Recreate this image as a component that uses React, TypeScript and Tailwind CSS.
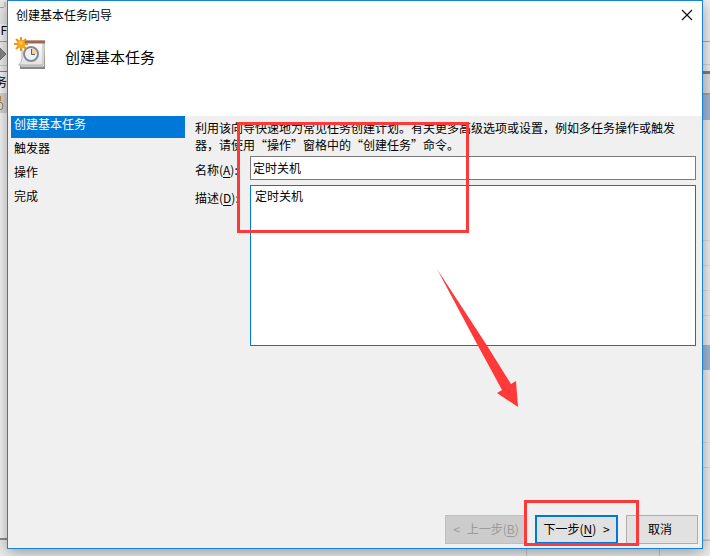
import type { ReactNode } from 'react';

const steps = ['创建基本任务', '触发器', '操作', '完成'];

const TaskIcon = () => (
  <svg width="34" height="34" viewBox="0 0 34 34" aria-hidden="true">
    <defs>
      <linearGradient id="page" x1="0" y1="0" x2="0" y2="1">
        <stop offset="0" stopColor="#ffffff" />
        <stop offset="1" stopColor="#e2e2e2" />
      </linearGradient>
      <linearGradient id="stack" x1="0" y1="0" x2="0" y2="1">
        <stop offset="0" stopColor="#d6d6d6" />
        <stop offset="1" stopColor="#858585" />
      </linearGradient>
    </defs>
    <path d="M29 4h2v28H6v-4h23z" fill="url(#stack)" />
    <path d="M7 29h22.500V6" fill="none" stroke="#f6f6f6" />
    <path d="M8 5h21v23H4.500q3-2 3.500-6z" fill="url(#page)" stroke="#b5b5b5" />
    <path d="M8 3h23v3.500H8z" fill="#9c6857" />
    <path d="M8 3.500h23" stroke="#c49a8a" />
    <circle cx="17" cy="17" r="7" fill="#eef2f6" stroke="#858b91" strokeWidth="2" />
    <path d="M17 17v-5.500a5.500 5.500 0 0 1 5.500 5.500z" fill="#f4d48b" />
    <path d="M17.500 12v5.500H21" fill="none" stroke="#4f6272" />
    <g stroke="#ee930c" strokeWidth="2">
      <path d="M7 0v14M0 7h14M2 2l10 10M12 2L2 12" />
    </g>
    <circle cx="7" cy="7" r="4" fill="#f9a51b" />
    <circle cx="7" cy="6" r="2" fill="#ffc43c" />
  </svg>
);

const Key = ({ children }: { children: ReactNode }) => (
  <span className="underline underline-offset-2">{children}</span>
);

const LeftStrip = () => (
  <div className="flex w-[7px] shrink-0 flex-col overflow-hidden bg-[#fafafa]">
    <div className="h-6 shrink-0 bg-[#eeeeee]">
      <svg width="7" height="24" viewBox="0 0 7 24" aria-hidden="true">
        <path d="M0 7.500h4M5 2v5" stroke="#aaaaaa" />
      </svg>
    </div>
    <div className="flex h-[17px] shrink-0 justify-end text-xs leading-3">F</div>
    <div className="flex h-6 shrink-0 items-center border-t border-[#a0a0a0] bg-[#f4f4f4]">
      <svg width="7" height="18" viewBox="0 0 7 18" aria-hidden="true">
        <path d="M0 3l6 6-6 6z" fill="#8e8e8e" stroke="#777" />
      </svg>
    </div>
    <div className="h-[6px] shrink-0 border-t border-[#cccccc] bg-[#f4f4f4]" />
    <div className="flex h-[22px] shrink-0 justify-end border-t border-[#888888] text-xs leading-5">务</div>
    <div className="h-5 shrink-0 bg-[#d9d9d9]">
      <svg width="7" height="20" viewBox="0 0 7 20" aria-hidden="true">
        <path d="M0 3v5" stroke="#c38a45" strokeWidth="2" />
        <circle cx="-1" cy="13" r="4" fill="#eee4ca" stroke="#8b8578" />
      </svg>
    </div>
    <div className="flex-1 border-b-2 border-[#919191]" />
    <div className="h-4 shrink-0 bg-[#f0f0f0]" />
  </div>
);

const RightStrip = () => (
  <div className="flex w-[7px] shrink-0 flex-col bg-[#f4f4f4]">
    <div className="h-[41px] shrink-0" />
    <div className="h-[23px] shrink-0 border-t border-[#b0b0b0]" />
    <div className="h-[7px] shrink-0 border-t border-[#d8d8d8]" />
    <div className="h-[22px] shrink-0 border-t-3 border-[#808080] bg-[#e4e4e4]" />
    <div className="h-[27px] shrink-0 border-t-2 border-[#a8a8a8] bg-[#a5bcda]" />
    <div className="h-[120px] shrink-0" />
    <div className="h-[25px] shrink-0 border-t border-[#e2e2e2]" />
    <div className="h-[25px] shrink-0 border-t border-[#e2e2e2]" />
    <div className="h-[25px] shrink-0 border-t border-[#e2e2e2]" />
    <div className="h-[30px] shrink-0 border-t border-[#e2e2e2]" />
    <div className="h-[25px] shrink-0 bg-[#a5bcda]" />
    <div className="h-[72px] shrink-0" />
    <div className="h-[25px] shrink-0 border-t border-[#e2e2e2]" />
    <div className="flex-1 border-y border-[#dcdcdc]" />
    <div className="h-4 shrink-0 border-t border-[#cccccc] bg-[#f0f0f0]" />
  </div>
);

const Arrow = () => (
  <svg className="pointer-events-none absolute left-[242px] top-[153px]" width="82" height="139" viewBox="0 0 82 139" aria-hidden="true">
    <path d="M0 0L49 75 74 115 79 112 81 138 60 124 65 121 40 75z" fill="#fd3a39" />
  </svg>
);

const Wizard = () => (
  <section
    aria-label="创建基本任务向导"
    className="relative z-10 flex min-w-0 flex-1 flex-col border border-[#1883d7] bg-[#f0f0f0] shadow-[0_3px_16px_rgba(0,0,0,0.4)]"
  >
    <header className="bg-white">
      <div className="flex h-7 items-center justify-between pl-2 pr-[9px]">
        <span>创建基本任务向导</span>
        <button type="button" aria-label="关闭">
          <svg width="12" height="12" viewBox="0 0 12 12" aria-hidden="true">
            <path d="M1 1l10 10M11 1L1 11" stroke="#111" strokeWidth="1.200" />
          </svg>
        </button>
      </div>
      <div className="flex h-[87px] items-start gap-[17px] pl-[6px] pt-2">
        <TaskIcon />
        <h1 className="pt-2 text-[15px] leading-6">创建基本任务</h1>
      </div>
    </header>

    <div className="flex flex-1">
      <ol className="flex w-[177px] shrink-0 flex-col gap-[2px] pl-[3px]">
        {steps.map((step, i) => (
          <li
            key={step}
            className={i === 0 ? 'h-[22px] bg-[#0078d7] pl-[3px] leading-4 text-white' : 'h-[22px] pl-[3px] leading-4'}
          >
            {step}
          </li>
        ))}
      </ol>

      <form className="relative flex min-w-0 flex-1 flex-col pl-[10px] pr-[6px] pt-[3px]">
        <p className="leading-[17px]">
          利用该向导快速地为常见任务创建计划。有关更多高级选项或设置，例如多任务操作或触发器，请使用“操作”窗格中的“创建任务”命令。
        </p>
        <div className="mt-[3px] flex">
          <label htmlFor="name" className="w-[55px] shrink-0 leading-[28px]">
            名称(<Key>A</Key>):
          </label>
          <input
            id="name"
            defaultValue="定时关机"
            className="h-6 min-w-0 flex-1 border border-[#7a7a7a] bg-white px-[2px] pb-[2px] outline-none"
          />
        </div>
        <div className="mt-[1px] flex">
          <label htmlFor="description" className="w-[55px] shrink-0 leading-[26px]">
            描述(<Key>D</Key>):
          </label>
          <textarea
            id="description"
            defaultValue="定时关机"
            className="h-[161px] min-w-0 flex-1 resize-none border border-[#0078d7] bg-white px-1 py-[2px] leading-4 outline-none"
          />
        </div>
        <div className="pointer-events-none absolute left-[52px] top-[6px] h-[111px] w-[232px] border-3 border-[#fd3a39]" />
        <div className="pointer-events-none absolute left-[10px] top-0">
          <Arrow />
        </div>
      </form>
    </div>

    <footer className="flex justify-end gap-2 pb-1 pr-1">
      <button type="button" disabled className="h-[29px] w-[82px] border border-[#bfbfbf] bg-[#cccccc] pb-[2px] text-[#9a9a9a]">
        <span className="mr-1">&lt;</span> 上一步(<Key>B</Key>)
      </button>
      <div className="relative">
        <button type="button" className="h-[29px] w-[83px] border-2 border-[#0078d7] bg-[#e1e1e1] pb-[2px]">
          下一步(<Key>N</Key>) <span className="ml-1">&gt;</span>
        </button>
        <div className="pointer-events-none absolute -left-[11px] -top-[15px] h-[46px] w-[115px] border-3 border-[#fd3a39]" />
      </div>
      <button type="button" className="h-[29px] w-[72px] border border-[#adadad] bg-[#e1e1e1] pr-1 pb-[2px]">
        取消
      </button>
    </footer>
  </section>
);

const BottomStrip = () => (
  <div className="flex h-[7px] shrink-0 bg-[#f0f0f0]">
    <div className="flex-1 border-r border-[#cccccc]" />
    <div className="w-[133px] border-r border-[#cccccc]" />
    <div className="w-[43px]" />
  </div>
);

export default function App() {
  return (
    <main className="flex min-h-screen overflow-hidden bg-[#f0f0f0] font-['Noto_Sans_CJK_SC','Noto_Sans',sans-serif] text-xs text-black">
      <LeftStrip />
      <div className="flex min-w-0 flex-1 flex-col">
        <Wizard />
        <BottomStrip />
      </div>
      <RightStrip />
    </main>
  );
}
